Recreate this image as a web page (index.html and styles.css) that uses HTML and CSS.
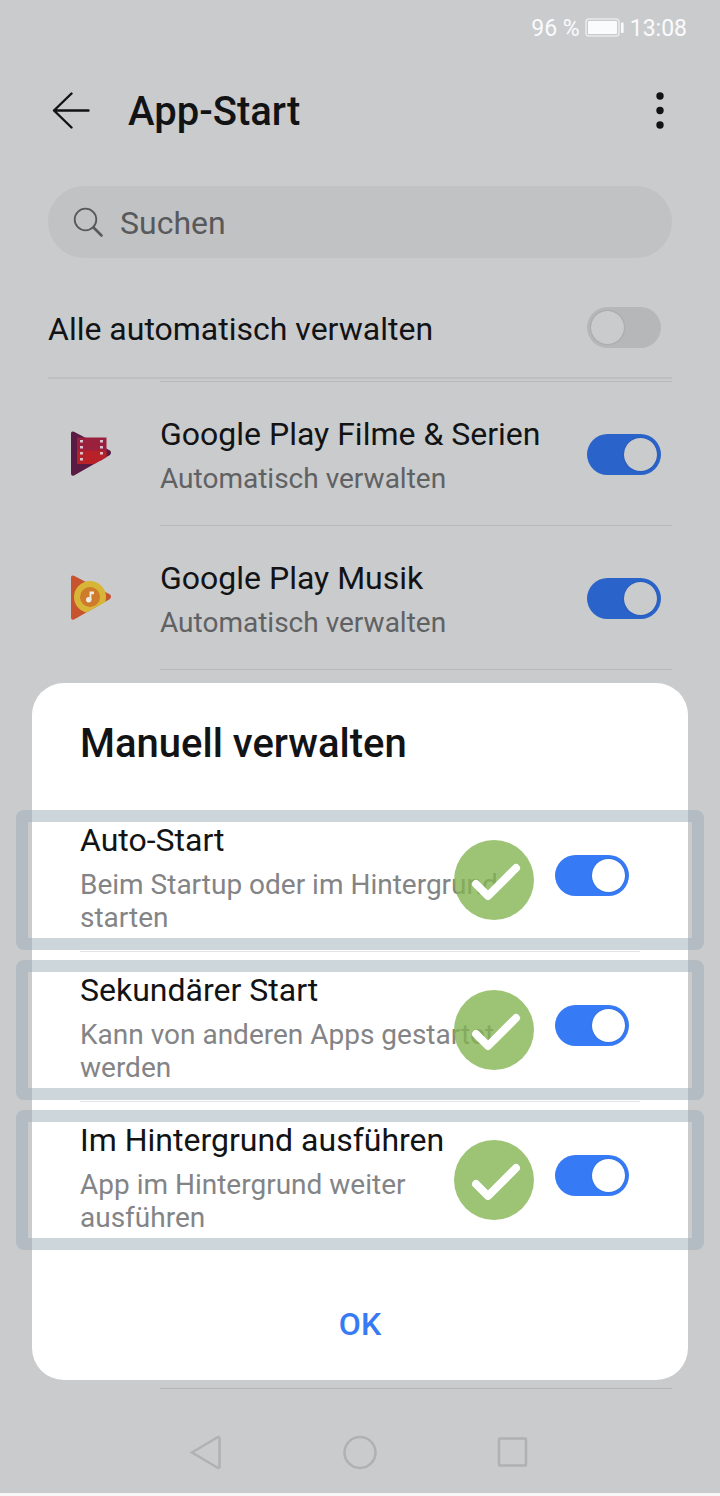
FILE: index.html
```html
<!DOCTYPE html>
<html lang="de">
<head>
<meta charset="utf-8">
<meta name="viewport" content="width=device-width, initial-scale=1">
<title>App-Start</title>
<link rel="stylesheet" href="styles.css">
</head>
<body>
<div class="phone">
  <div class="screen">
    <div class="status">
      <span>96 %</span>
      <svg class="battery" width="40" height="20" viewBox="0 0 40 20" aria-hidden="true">
        <rect x="1" y="1" width="33" height="17" rx="3" fill="none" stroke="#e9eaec" stroke-width="1.6"/>
        <rect x="3" y="3" width="29" height="13" rx="1" fill="#fafbfd"/>
        <rect x="36" y="4.500" width="2.600" height="10.500" rx="1" fill="#fafbfd"/>
      </svg>
      <span>13:08</span>
    </div>
    <header class="header">
      <button class="icon-button" aria-label="Zurück">
        <svg width="38" height="38" viewBox="0 0 38 38" fill="none" stroke="#121315" stroke-width="2.400" stroke-linecap="round" stroke-linejoin="round"><path d="M19.500 1.500 2 18.500 19.500 35.500M2 18.500H36.500"/></svg>
      </button>
      <h1 class="title">App-Start</h1>
      <button class="icon-button" aria-label="Mehr">
        <svg width="24" height="38" viewBox="0 0 24 38" fill="#121315"><circle cx="12" cy="4" r="3.700"/><circle cx="12" cy="18.500" r="3.700"/><circle cx="12" cy="33" r="3.700"/></svg>
      </button>
    </header>
    <div class="search">
      <svg width="32" height="32" viewBox="0 0 32 32" fill="none" stroke="#58595b" stroke-linecap="round" aria-hidden="true"><circle cx="12.500" cy="13.500" r="10.800" stroke-width="1.800"/><path d="M20.500 21.500 28.500 29.500" stroke-width="2.600"/></svg>
      <input class="search-input" type="text" placeholder="Suchen" aria-label="Suchen">
    </div>
    <main class="content">
      <div class="all">
        <label class="name" for="all">Alle automatisch verwalten</label>
        <input class="toggle" type="checkbox" id="all">
      </div>
      <div class="app first">
        <svg class="app-icon" width="48" height="48" viewBox="0 0 48 48" aria-hidden="true">
          <path d="M7 3.500Q7 .500 10 1.800L20 7 46 20.500Q48 22.500 46 25L10 45.500Q7 46.500 7 43.500Z" fill="#591a44"/>
          <path d="M13 7.500H42.500V27L37 30.500H13Z" fill="#9a203e"/>
          <path d="M13 20.500H42.500V27L30 34H13Z" fill="#b92129"/>
          <path d="M16 10h3v2.600h-3zm0 6h3v2.600h-3zm0 6h3v2.600h-3zm0 6h3v2.600h-3zM36 10h3v2.600h-3zm0 6h3v2.600h-3zm0 6h3v2.600h-3z" fill="#d7c5ce"/>
        </svg>
        <label class="app-text" for="movies">
          <span class="name">Google Play Filme &amp; Serien</span>
          <span class="detail">Automatisch verwalten</span>
        </label>
        <input class="toggle" type="checkbox" id="movies" checked>
      </div>
      <div class="app">
        <svg class="app-icon" width="48" height="48" viewBox="0 0 48 48" aria-hidden="true">
          <defs><clipPath id="play"><path d="M7 0H44V26.500L10 45.500H7Z"/></clipPath></defs>
          <path d="M7 3.500Q7 .500 10 1.800L20 7 46 20.500Q48 22.500 46 25L10 45.500Q7 46.500 7 43.500Z" fill="#c7532f"/>
          <circle cx="26" cy="23" r="16" fill="#d7b536" clip-path="url(#play)"/>
          <circle cx="26" cy="23" r="10" fill="#ce7b2b"/>
          <circle cx="24.700" cy="25.700" r="2.700" fill="#eeebe5"/>
          <path d="M25.500 17.500H30V20.300H27.400V26H25.500Z" fill="#eeebe5"/>
        </svg>
        <label class="app-text" for="music">
          <span class="name">Google Play Musik</span>
          <span class="detail">Automatisch verwalten</span>
        </label>
        <input class="toggle" type="checkbox" id="music" checked>
      </div>
      <div class="rest"></div>
    </main>
    <nav class="nav">
      <button class="nav-button" aria-label="Zurück"><svg width="36" height="36" viewBox="0 0 36 36"><path d="M3 18.500 28.500 3.300Q30.500 2.500 30.500 4.500V32.500Q30.500 34.500 28.500 33.700Z"/></svg></button>
      <button class="nav-button" aria-label="Startbildschirm"><svg width="36" height="36" viewBox="0 0 36 36"><circle cx="18" cy="18.500" r="15.500"/></svg></button>
      <button class="nav-button" aria-label="Übersicht"><svg width="36" height="36" viewBox="0 0 36 36"><rect x="4" y="4.500" width="27" height="27" rx="1"/></svg></button>
    </nav>
  </div>

  <section class="dialog" role="dialog" aria-labelledby="dialog-title">
    <h2 class="title dialog-title" id="dialog-title">Manuell verwalten</h2>
    <div class="options">
      <div class="option">
        <label class="option-text" for="auto">
          <span class="name">Auto-Start</span>
          <span class="detail">Beim Startup oder im Hintergrund starten</span>
        </label>
        <input class="toggle" type="checkbox" id="auto" checked>
        <div class="frame"></div>
        <svg class="check" width="80" height="80" viewBox="0 0 80 80" aria-hidden="true"><circle cx="40" cy="40" r="40"/><path d="M22 44 34 56 62 28"/></svg>
      </div>
      <div class="option">
        <label class="option-text" for="secondary">
          <span class="name">Sekundärer Start</span>
          <span class="detail">Kann von anderen Apps gestartet werden</span>
        </label>
        <input class="toggle" type="checkbox" id="secondary" checked>
        <div class="frame"></div>
        <svg class="check" width="80" height="80" viewBox="0 0 80 80" aria-hidden="true"><circle cx="40" cy="40" r="40"/><path d="M22 44 34 56 62 28"/></svg>
      </div>
      <div class="option">
        <label class="option-text" for="background">
          <span class="name">Im Hintergrund ausführen</span>
          <span class="detail">App im Hintergrund weiter ausführen</span>
        </label>
        <input class="toggle" type="checkbox" id="background" checked>
        <div class="frame"></div>
        <svg class="check" width="80" height="80" viewBox="0 0 80 80" aria-hidden="true"><circle cx="40" cy="40" r="40"/><path d="M22 44 34 56 62 28"/></svg>
      </div>
    </div>
    <button class="ok">OK</button>
  </section>
</div>
</body>
</html>
```
FILE: styles.css
```css
* {
  box-sizing: border-box;
}

body {
  margin: 0;
  background: #f7f7f7;
  color: #121315;
  font-family: Roboto, "Noto Sans", sans-serif;
}

button {
  padding: 0;
  border: 0;
  background: none;
  font: inherit;
}

svg {
  display: block;
  flex: none;
}

.phone {
  display: grid;
  padding-bottom: 3px;
}

.screen,
.dialog {
  grid-area: 1 / 1;
}

.screen {
  display: flex;
  flex-direction: column;
  min-height: calc(100vh - 3px);
  background: #cacbcd;
}

.status {
  display: flex;
  justify-content: flex-end;
  align-items: center;
  gap: 5px;
  height: 56px;
  padding-right: 33px;
  color: #fafbfd;
  font-size: 23px;
}

.header {
  display: flex;
  align-items: center;
  height: 110px;
  padding: 0 48px 0 52px;
}

.title {
  margin: 0;
  font-size: 40px;
  font-weight: 500;
  line-height: 48px;
}

.header .title {
  flex: 1;
  margin-left: 38px;
  padding-top: 2px;
}

.search {
  display: flex;
  align-items: center;
  gap: 15px;
  height: 72px;
  margin: 20px 48px;
  padding: 0 25px;
  border-radius: 36px;
  background: #c1c2c4;
}

.search-input {
  flex: 1;
  min-width: 0;
  padding: 2px 0 0;
  border: 0;
  background: none;
  color: #58595b;
  font: inherit;
  font-size: 32px;
  line-height: 40px;
}

.search-input::placeholder {
  color: #58595b;
  opacity: 1;
}

.content {
  display: flex;
  flex: 1;
  flex-direction: column;
  padding: 0 48px;
}

.all {
  display: flex;
  justify-content: space-between;
  align-items: center;
  height: 101px;
  border-bottom: 2px solid #bebfc1;
}

.all .name {
  padding-top: 2px;
}

.name {
  font-size: 32px;
  line-height: 40px;
}

.detail {
  color: #606163;
  font-size: 28px;
  line-height: 33px;
}

.app {
  display: grid;
  grid-template-columns: 112px 1fr auto;
  align-items: center;
  height: 144px;
  background: linear-gradient(#b7b8ba, #b7b8ba) 112px 100% / 100% 1px no-repeat;
}

.app.first {
  margin-top: 2px;
  height: 145px;
  border-top: 1px solid transparent;
  background: linear-gradient(#b7b8ba, #b7b8ba) 112px 0 / 100% 1px no-repeat border-box,
    linear-gradient(#b7b8ba, #b7b8ba) 112px 100% / 100% 1px no-repeat;
}

.app-icon {
  margin-left: 16px;
}

.app-text,
.option-text {
  display: flex;
  flex-direction: column;
  gap: 8px;
}

.app-text {
  padding-top: 1px;
}

.toggle {
  flex: none;
  width: 74px;
  height: 41px;
  margin: 0 11px 0 0;
  padding: 4px;
  border-radius: 21px;
  background: #b6b7b9;
  appearance: none;
}

.toggle::before {
  display: block;
  width: 33px;
  height: 33px;
  border-radius: 50%;
  background: #cacbcd;
  box-shadow: 0 0 2px rgba(0, 0, 0, 0.2);
  content: "";
}

.toggle:checked {
  background: #2a63c9;
}

.toggle:checked::before {
  margin-left: auto;
}

.rest {
  flex: 1;
  min-height: 718px;
  margin-left: 112px;
  border-bottom: 1px solid #b4b5b7;
}

.nav {
  display: flex;
  justify-content: center;
  gap: 117px;
  padding: 45px 0 23px;
}

.nav-button svg {
  fill: none;
  stroke: #b0b1b3;
  stroke-width: 2.5;
}

.dialog {
  display: flex;
  flex-direction: column;
  align-self: end;
  gap: 42px;
  margin: 0 32px 113px;
  padding: 37px 0 32px;
  border-radius: 32px;
  background: #ffffff;
}

.dialog-title {
  padding: 0 48px;
}

.options {
  display: flex;
  flex-direction: column;
  gap: 10px;
}

.option {
  position: relative;
  display: flex;
  align-items: flex-start;
  justify-content: space-between;
  min-height: 140px;
  padding: 10px 48px 16px;
}

.option + .option::before {
  position: absolute;
  top: -9px;
  right: 48px;
  left: 48px;
  height: 1px;
  background: #e4e4e6;
  content: "";
}

.option-text {
  max-width: 428px;
}

.option .detail {
  color: #838486;
}

.option .toggle {
  margin-top: 35px;
}

.option .toggle:checked {
  background: #367bf5;
}

.option .toggle::before {
  background: #ffffff;
}

.frame {
  position: absolute;
  inset: 0 -16px;
  border: 12px solid rgba(153, 173, 183, 0.5);
  border-radius: 8px;
  pointer-events: none;
}

.check {
  position: absolute;
  top: 30px;
  right: 154px;
  pointer-events: none;
}

.check circle {
  fill: rgba(132, 180, 82, 0.8);
}

.check path {
  fill: none;
  stroke: #ffffff;
  stroke-width: 8;
  stroke-linecap: round;
  stroke-linejoin: round;
}

.ok {
  align-self: center;
  margin-top: 8px;
  padding: 0 24px;
  color: #367bf5;
  font-size: 32px;
  font-weight: 500;
  line-height: 48px;
}
```
